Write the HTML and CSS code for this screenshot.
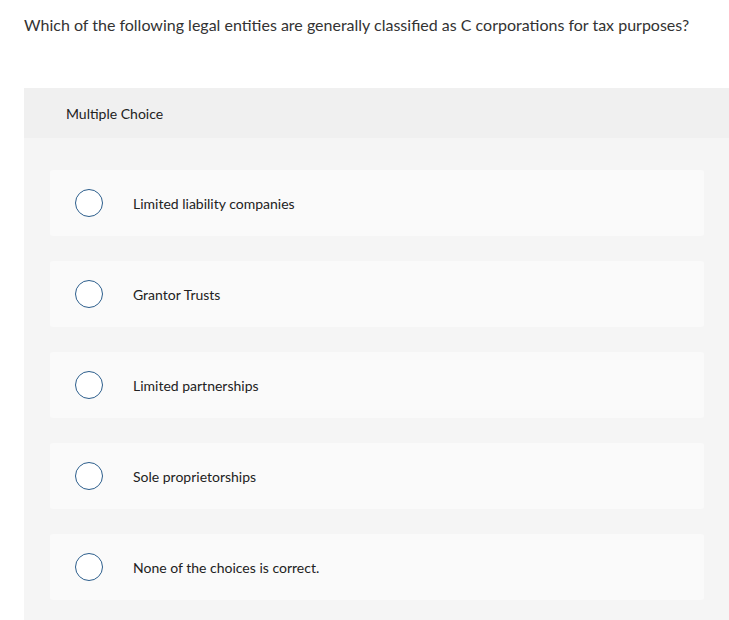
FILE: index.html
```html
<!DOCTYPE html>
<html>
<head>
<meta charset="utf-8">
<link rel="stylesheet" href="styles.css">
</head>
<body>
<div class="page">
  <p class="question">Which of the following legal entities are generally classified as C corporations for tax purposes?</p>
  <div class="panel">
    <div class="panel-header">Multiple Choice</div>
    <div class="panel-body">
      <div class="option"><span class="radio"></span><span class="label">Limited liability companies</span></div>
      <div class="option"><span class="radio"></span><span class="label">Grantor Trusts</span></div>
      <div class="option"><span class="radio"></span><span class="label">Limited partnerships</span></div>
      <div class="option"><span class="radio"></span><span class="label">Sole proprietorships</span></div>
      <div class="option"><span class="radio"></span><span class="label">None of the choices is correct.</span></div>
    </div>
  </div>
</div>
</body>
</html>
```
FILE: styles.css
```css
html, body {
  margin: 0;
  padding: 0;
  background: #ffffff;
  overflow: hidden;
}
.page {
  padding-left: 24px;
  font-family: "Lato", "Open Sans", sans-serif;
  color: #333333;
}
.question {
  margin: 0;
  padding-top: 15px;
  height: 88px;
  box-sizing: border-box;
  font-size: 16px;
  line-height: 20px;
  color: #333;
}
.panel {
  background: #f5f5f5;
  padding-bottom: 40px;
}
.panel-header {
  background: #f0f0f0;
  height: 50px;
  box-sizing: border-box;
  padding-left: 42px;
  display: flex;
  align-items: center;
  font-size: 14px;
  color: #222;
}
.panel-body {
  padding: 32px 25px 0 26px;
  display: flex;
  flex-direction: column;
  gap: 25px;
}
.option {
  background: #fafafa;
  border-radius: 3px;
  height: 66px;
  display: flex;
  align-items: center;
  padding-left: 25px;
}
.radio {
  width: 28px;
  height: 28px;
  box-sizing: border-box;
  border: 1.5px solid #2c5e8c;
  border-radius: 50%;
  background: #fff;
  flex: none;
}
.label {
  margin-left: 30px;
  font-size: 14px;
  color: #222;
}
```
